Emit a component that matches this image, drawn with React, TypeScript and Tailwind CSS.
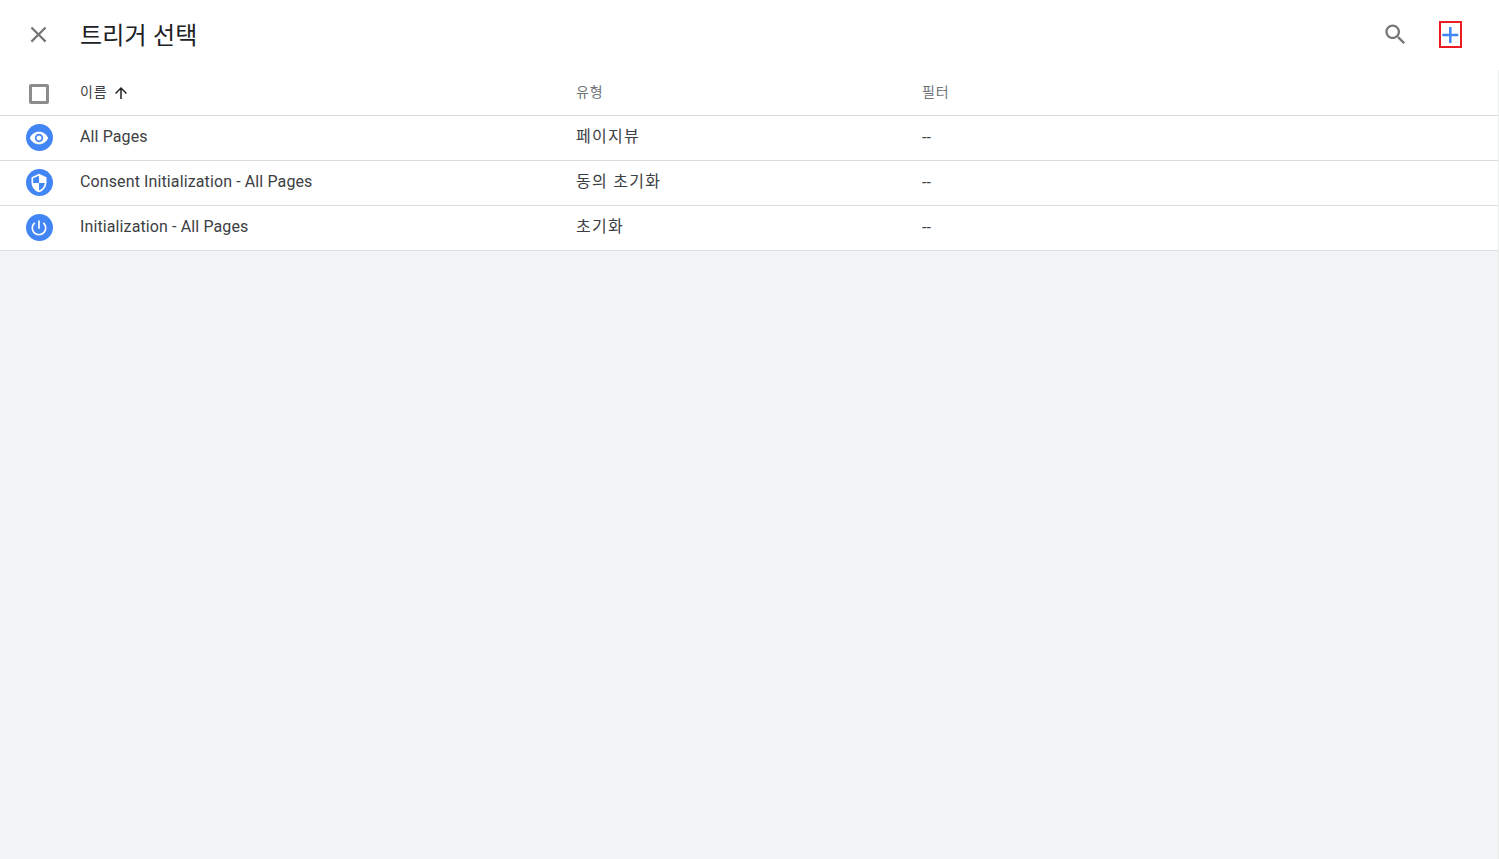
import React from "react";

const rows = [
  { name: "All Pages", type: "페이지뷰", icon: "eye" },
  { name: "Consent Initialization - All Pages", type: "동의 초기화", icon: "shield" },
  { name: "Initialization - All Pages", type: "초기화", icon: "power" },
];

function TriggerIcon({ icon }: { icon: string }) {
  return (
    <div className="flex h-[27px] w-[27px] items-center justify-center rounded-full bg-[#4285f4]">
      <svg width="20" height="20" viewBox="0 0 24 24" fill="#fff">
        {icon === "eye" && (
          <path d="M12 4.5C7 4.5 2.73 7.61 1 12c1.73 4.39 6 7.5 11 7.5s9.27-3.11 11-7.5c-1.73-4.39-6-7.5-11-7.5zM12 17c-2.76 0-5-2.24-5-5s2.24-5 5-5 5 2.24 5 5-2.24 5-5 5zm0-8c-1.66 0-3 1.34-3 3s1.34 3 3 3 3-1.34 3-3-1.34-3-3-3z" />
        )}
        {icon === "shield" && (
          <path d="M12 1L3 5v6c0 5.55 3.84 10.74 9 12 5.16-1.26 9-6.45 9-12V5l-9-4zm0 10.99h7c-.53 4.12-3.28 7.79-7 8.94V12H5V6.3l7-3.11v8.8z" />
        )}
        {icon === "power" && (
          <path d="M13 3h-2v10h2V3zm4.83 2.17l-1.42 1.42C17.99 7.86 19 9.81 19 12c0 3.87-3.13 7-7 7s-7-3.13-7-7c0-2.19 1.01-4.14 2.58-5.42L6.17 5.17C4.23 6.82 3 9.26 3 12c0 4.97 4.03 9 9 9s9-4.03 9-9c0-2.74-1.23-5.18-3.17-6.83z" />
        )}
      </svg>
    </div>
  );
}

export default function App() {
  return (
    <div className="flex h-[859px] flex-col bg-white font-['Roboto','Noto_Sans_CJK_KR',sans-serif] text-[#3c4043]">
      <header className="flex h-[70px] items-center pr-[37px]">
        <div className="flex w-[80px] justify-center pr-[3px] pb-[1px]">
          <svg width="27" height="27" viewBox="0 0 24 24" fill="#757575">
            <path d="M19 6.41L17.59 5 12 10.59 6.41 5 5 6.41 10.59 12 5 17.59 6.41 19 12 13.41 17.59 19 19 17.59 13.41 12z" />
          </svg>
        </div>
        <h1 className="flex-1 pt-[2px] text-[24px] font-normal leading-[32px] tracking-[0.2px] text-[#202124]">트리거 선택</h1>
        <svg className="mr-[30px] mb-[2px]" width="27" height="27" viewBox="0 0 24 24" fill="#757575">
          <path d="M15.5 14h-.79l-.28-.27C15.41 12.59 16 11.11 16 9.5 16 5.91 13.09 3 9.5 3S3 5.91 3 9.5 5.91 16 9.5 16c1.61 0 3.09-.59 4.23-1.57l.27.28v.79l5 4.99L20.49 19l-4.99-5zm-6 0C7.01 14 5 11.99 5 9.5S7.01 5 9.5 5 14 7.01 14 9.5 11.99 14 9.5 14z" />
        </svg>
        <div className="mb-[1px] flex h-[27px] w-[23px] items-center justify-center border-2 border-[#ed1c24]">
          <svg width="24" height="24" viewBox="0.7 0 24 24" fill="#4285f4" className="shrink-0">
            <path d="M20 13.25h-6.75V20h-2.5v-6.75H4v-2.5h6.75V4h2.5v6.75H20z" />
          </svg>
        </div>
      </header>
      <div className="flex flex-1 flex-col border-r border-[#eceded] bg-[#f1f3f4]">
        <div className="bg-white">
          <div className="flex h-[46px] items-center border-b border-[#dadce0] text-[14px] text-[#70757a]">
            <div className="flex w-[80px] justify-center pr-[2px] pt-[3px]">
              <div className="h-[20px] w-[20px] rounded-[2px] border-[3px] border-[#8c8c8c]" />
            </div>
            <div className="flex w-[496px] items-center gap-[4px] tracking-[0.9px] text-[#3c4043]">
              이름
              <svg width="18" height="18" viewBox="0 0 24 24" fill="#202124">
                <path d="M4 12l1.41 1.41L11 7.83V20h2V7.83l5.58 5.59L20 12l-8-8-8 8z" />
              </svg>
            </div>
            <div className="w-[346px] tracking-[0.9px]">유형</div>
            <div className="tracking-[0.9px]">필터</div>
          </div>
          {rows.map((row) => (
            <div key={row.name} className="flex h-[45px] items-center border-b border-[#dadce0] text-[16px]">
              <div className="flex w-[80px] justify-center pr-[2px] pb-[1px]">
                <TriggerIcon icon={row.icon} />
              </div>
              <div className="w-[496px] pb-[2px] tracking-[0.115px]">{row.name}</div>
              <div className="w-[346px] pb-[2px] tracking-[1.3px]">{row.type}</div>
              <div>--</div>
            </div>
          ))}
        </div>
      </div>
    </div>
  );
}
